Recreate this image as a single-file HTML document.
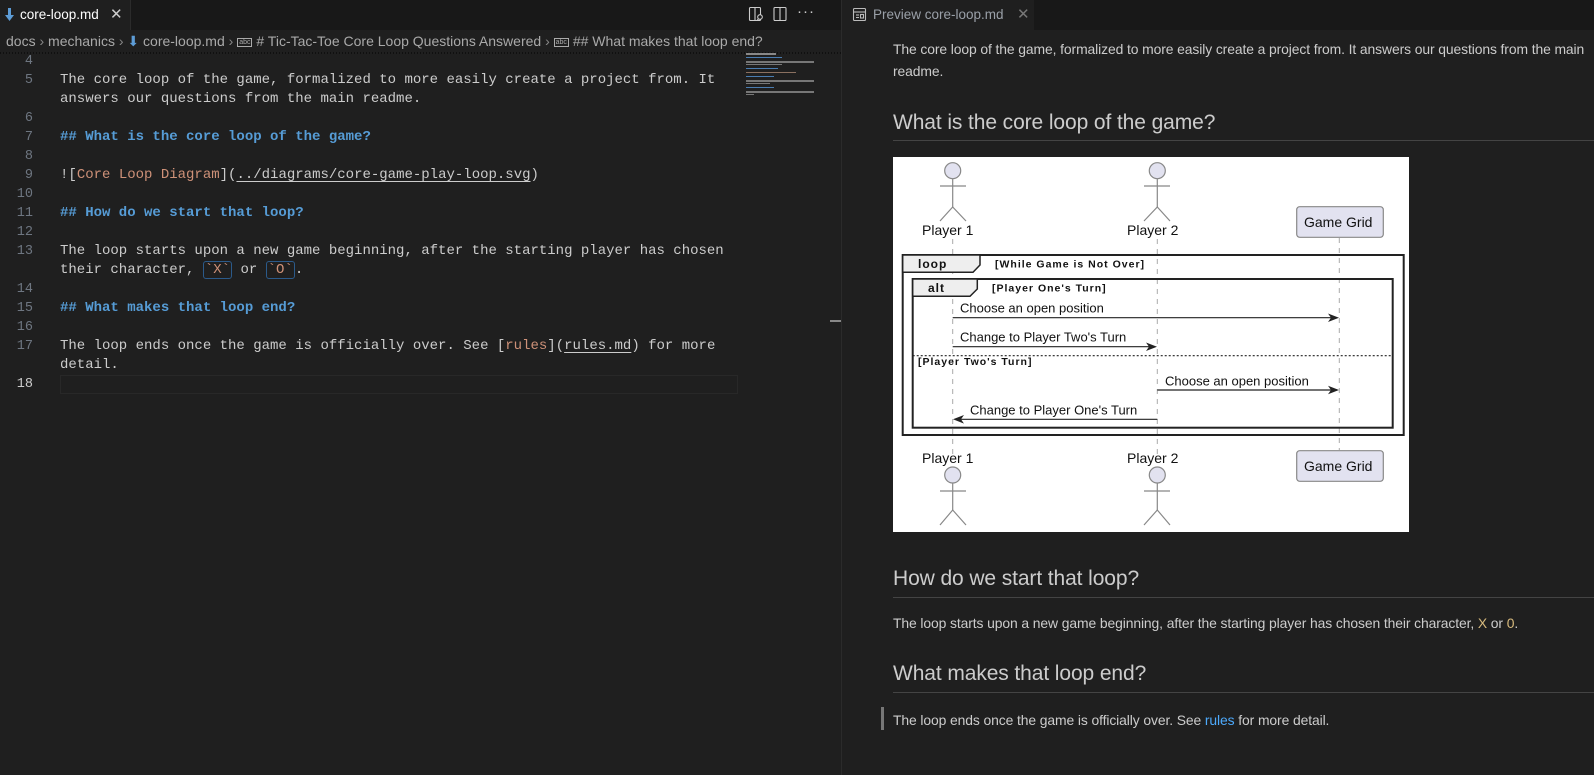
<!DOCTYPE html>
<html><head><meta charset="utf-8"><style>
*{margin:0;padding:0;box-sizing:border-box}
body{width:1594px;height:775px;background:#1f1f1f;position:relative;overflow:hidden;font-family:"Liberation Sans",sans-serif;color:#ccc}
.abs{position:absolute}
.tabbar{left:0;top:0;width:1594px;height:30px;background:#181818}
.mono{font-family:"Liberation Mono",monospace;font-size:14px;white-space:pre;line-height:19px}
.ln{position:absolute;left:0;width:33px;text-align:right;color:#6e7681;font-family:"Liberation Mono",monospace;font-size:13.5px;line-height:19px}
.tx{position:absolute;left:60px;color:#cccccc}
.h{color:#569cd6;font-weight:bold}
.lk{color:#ce9178}
.u{text-decoration:underline;text-underline-offset:3px}
.code{border:1px solid #2b5a8a;border-radius:3px;color:#ce9178;padding:0 1px}
.pv{position:absolute;left:893px;font-size:13.9px;letter-spacing:-0.1px;color:#cccccc;white-space:nowrap}
.h2{position:absolute;left:893px;width:720px;font-size:21px;letter-spacing:-0.1px;color:#cccccc;border-bottom:1px solid #444;white-space:nowrap}
</style></head><body>
<div class="abs tabbar"></div>
<div class="abs" style="left:0;top:0;width:131px;height:30px;background:#1f1f1f;border-right:1px solid #2b2b2b"></div>
<svg class="abs" style="left:5px;top:8px" width="9" height="14" viewBox="0 0 9 14"><rect x="3" y="0" width="3" height="8" fill="#5d9cd6"/><path d="M0 7 L9 7 L4.5 13Z" fill="#5d9cd6"/></svg>
<div class="abs" style="left:20px;top:7px;font-size:13.5px;color:#fff">core-loop.md</div>
<div class="abs" style="left:110px;top:5px;font-size:15px;color:#ccc">✕</div>
<svg class="abs" style="left:748px;top:6px" width="16" height="16" viewBox="0 0 16 16" fill="none" stroke="#ccc" stroke-width="1.1"><rect x="1.5" y="1.5" width="11" height="13" rx="1"/><line x1="7" y1="1.5" x2="7" y2="14.5"/><circle cx="12" cy="11" r="2.3" fill="#181818"/><line x1="10.5" y1="12.8" x2="9" y2="14.5"/></svg>
<svg class="abs" style="left:772px;top:6px" width="16" height="16" viewBox="0 0 16 16" fill="none" stroke="#ccc" stroke-width="1.1"><rect x="2" y="1.5" width="12" height="13" rx="1"/><line x1="8" y1="1.5" x2="8" y2="14.5"/></svg>
<div class="abs" style="left:797px;top:3px;font-size:15px;color:#ccc;letter-spacing:1px">···</div>
<div class="abs" style="left:842px;top:0;width:192px;height:30px;background:#1f1f1f"></div>
<svg class="abs" style="left:852px;top:7px" width="15" height="15" viewBox="0 0 15 15" fill="none" stroke="#bbb" stroke-width="1.1"><rect x="1.5" y="1.5" width="12" height="12" rx="1"/><line x1="1.5" y1="5" x2="13.5" y2="5"/><line x1="4" y1="8" x2="7" y2="8"/><line x1="4" y1="10.5" x2="7" y2="10.5"/><rect x="8.5" y="7.5" width="3" height="3.5"/></svg>
<div class="abs" style="left:873px;top:7px;font-size:13.5px;color:#9aa0a8">Preview core-loop.md</div>
<div class="abs" style="left:1017px;top:5px;font-size:15px;color:#777">✕</div>
<div class="abs" style="left:841px;top:0;width:1px;height:775px;background:#2b2b2b"></div>
<div class="abs" style="left:6px;top:33px;font-size:14px;color:#a9a9a9;white-space:nowrap">docs <span style="color:#888">›</span> mechanics <span style="color:#888">›</span> <span style="color:#5d9cd6">⬇</span> core-loop.md <span style="color:#888">›</span> <span style="border:1px solid #aaa;font-size:7px;padding:0 1px;vertical-align:2px">abc</span> # Tic-Tac-Toe Core Loop Questions Answered <span style="color:#888">›</span> <span style="border:1px solid #aaa;font-size:7px;padding:0 1px;vertical-align:2px">abc</span> ## What makes that loop end?</div>
<div class="abs" style="left:0;top:52px;width:841px;height:2px;background:repeating-linear-gradient(90deg,#000 0 1px,transparent 1px 3px);opacity:.5"></div>
<div class="abs" style="left:0;top:52px;width:745px;height:400px">
<div class="ln" style="top:0">4</div>
<div class="ln" style="top:19px">5</div><div class="tx mono" style="top:19px">The core loop of the game, formalized to more easily create a project from. It</div>
<div class="tx mono" style="top:38px">answers our questions from the main readme.</div>
<div class="ln" style="top:57px">6</div>
<div class="ln" style="top:76px">7</div><div class="tx mono h" style="top:76px">## What is the core loop of the game?</div>
<div class="ln" style="top:95px">8</div>
<div class="ln" style="top:114px">9</div><div class="tx mono" style="top:114px">![<span class="lk">Core Loop Diagram</span>](<span class="u">../diagrams/core-game-play-loop.svg</span>)</div>
<div class="ln" style="top:133px">10</div>
<div class="ln" style="top:152px">11</div><div class="tx mono h" style="top:152px">## How do we start that loop?</div>
<div class="ln" style="top:171px">12</div>
<div class="ln" style="top:190px">13</div><div class="tx mono" style="top:190px">The loop starts upon a new game beginning, after the starting player has chosen</div>
<div class="tx mono" style="top:209px">their character, <span class="code">`X`</span> or <span class="code">`O`</span>.</div>
<div class="ln" style="top:228px">14</div>
<div class="ln" style="top:247px">15</div><div class="tx mono h" style="top:247px">## What makes that loop end?</div>
<div class="ln" style="top:266px">16</div>
<div class="ln" style="top:285px">17</div><div class="tx mono" style="top:285px">The loop ends once the game is officially over. See [<span class="lk">rules</span>](<span class="u">rules.md</span>) for more</div>
<div class="tx mono" style="top:304px">detail.</div>
<div class="abs" style="left:60px;top:323px;width:678px;height:19px;border:1px solid #282828"></div>
<div class="ln" style="top:323px;color:#ccc">18</div>
</div>
<div class="abs" style="left:746px;top:53px;width:70px;height:45px">
<div class="abs" style="left:0;top:0;width:30px;height:2px;background:#888"></div>
<div class="abs" style="left:0;top:4px;width:36px;height:1px;background:#4a7cb0"></div>
<div class="abs" style="left:0;top:8px;width:68px;height:2px;background:#777"></div>
<div class="abs" style="left:0;top:11px;width:36px;height:1px;background:#777"></div>
<div class="abs" style="left:0;top:15px;width:32px;height:1px;background:#4a7cb0"></div>
<div class="abs" style="left:0;top:19px;width:50px;height:1px;background:#8a7060"></div>
<div class="abs" style="left:0;top:23px;width:28px;height:1px;background:#4a7cb0"></div>
<div class="abs" style="left:0;top:27px;width:68px;height:2px;background:#777"></div>
<div class="abs" style="left:0;top:30px;width:24px;height:1px;background:#777"></div>
<div class="abs" style="left:0;top:34px;width:28px;height:1px;background:#4a7cb0"></div>
<div class="abs" style="left:0;top:38px;width:68px;height:2px;background:#777"></div>
<div class="abs" style="left:0;top:41px;width:8px;height:1px;background:#777"></div>
</div>
<div class="abs" style="left:830px;top:320px;width:11px;height:2px;background:#888"></div>
<div class="pv" style="top:41px">The core loop of the game, formalized to more easily create a project from. It answers our questions from the main</div>
<div class="pv" style="top:63px">readme.</div>
<div class="h2" style="top:111px;height:30px">What is the core loop of the game?</div>
<svg class="abs" style="left:893px;top:157px;background:#fff" width="516" height="375" viewBox="0 0 516 375" font-family="Liberation Sans, sans-serif">
<g stroke="#aaa" stroke-width="1" stroke-dasharray="5,5">
<line x1="59.7" y1="82" x2="59.7" y2="300"/><line x1="264.3" y1="82" x2="264.3" y2="300"/><line x1="446.3" y1="81" x2="446.3" y2="293"/>
</g>
<g stroke="#888" fill="none" stroke-width="1.2">
<circle cx="59.7" cy="13.7" r="8" fill="#e2e2f0"/><line x1="59.7" y1="22" x2="59.7" y2="50"/><line x1="47" y1="29" x2="73" y2="29"/><path d="M47 64 L59.7 50 L73 64"/>
<circle cx="264.3" cy="13.7" r="8" fill="#e2e2f0"/><line x1="264.3" y1="22" x2="264.3" y2="50"/><line x1="251" y1="29" x2="277" y2="29"/><path d="M251 64 L264.3 50 L277 64"/>
<circle cx="59.7" cy="318" r="8" fill="#e2e2f0"/><line x1="59.7" y1="326" x2="59.7" y2="353"/><line x1="47" y1="334" x2="73" y2="334"/><path d="M47 368 L59.7 353 L73 368"/>
<circle cx="264.3" cy="318" r="8" fill="#e2e2f0"/><line x1="264.3" y1="326" x2="264.3" y2="353"/><line x1="251" y1="334" x2="277" y2="334"/><path d="M251 368 L264.3 353 L277 368"/>
<rect x="403.7" y="49.7" width="86.6" height="30.6" rx="3" fill="#e2e2f0"/>
<rect x="403.7" y="293.7" width="86.6" height="30.6" rx="3" fill="#e2e2f0"/>
</g>
<g font-size="14" fill="#111">
<text x="29" y="78">Player 1</text><text x="234" y="78">Player 2</text><text x="411" y="70">Game Grid</text>
<text x="29" y="306">Player 1</text><text x="234" y="306">Player 2</text><text x="411" y="314">Game Grid</text>
</g>
<g stroke="#222" fill="none" stroke-width="2">
<rect x="9.7" y="98" width="501" height="180"/>
<rect x="19.7" y="122" width="480" height="148.7"/>
</g>
<path d="M9.7 98 H87 V108 L80 115.3 H9.7Z" fill="#eee" stroke="#222" stroke-width="1.5"/>
<path d="M19.7 122 H84.3 V132 L77 139.3 H19.7Z" fill="#eee" stroke="#222" stroke-width="1.5"/>
<g font-weight="bold" fill="#111" letter-spacing="1">
<text x="25" y="111" font-size="12">loop</text>
<text x="102" y="110.7" font-size="10.5">[While Game is Not Over]</text>
<text x="35" y="135" font-size="12">alt</text>
<text x="99" y="134.7" font-size="10.5">[Player One's Turn]</text>
<text x="25" y="208" font-size="10.5">[Player Two's Turn]</text>
</g>
<line x1="19.7" y1="198.7" x2="500" y2="198.7" stroke="#222" stroke-width="1.2" stroke-dasharray="2,2"/>
<g font-size="13" fill="#111">
<text x="67" y="155.7">Choose an open position</text>
<text x="67" y="184.7">Change to Player Two's Turn</text>
<text x="272" y="228.7">Choose an open position</text>
<text x="77" y="257.3">Change to Player One's Turn</text>
</g>
<g stroke="#222" stroke-width="1.2">
<line x1="59.7" y1="160.7" x2="444" y2="160.7"/><line x1="59.7" y1="189.7" x2="262" y2="189.7"/>
<line x1="264.3" y1="233" x2="444" y2="233"/><line x1="264.3" y1="262.3" x2="62" y2="262.3"/>
</g>
<g fill="#222">
<path d="M446 160.7 L435 156.5 L438 160.7 L435 165Z"/><path d="M264 189.7 L253 185.5 L256 189.7 L253 194Z"/>
<path d="M446 233 L435 228.8 L438 233 L435 237.3Z"/><path d="M60 262.3 L71 258 L68 262.3 L71 266.6Z"/>
</g>
</svg>
<div class="h2" style="top:567px;height:31px">How do we start that loop?</div>
<div class="pv" style="top:615px">The loop starts upon a new game beginning, after the starting player has chosen their character, <span style="color:#d7ba7d">X</span> or <span style="color:#d7ba7d">0</span>.</div>
<div class="h2" style="top:662px;height:31px">What makes that loop end?</div>
<div class="abs" style="left:881px;top:707px;width:3px;height:23px;background:#777"></div>
<div class="pv" style="top:712px">The loop ends once the game is officially over. See <span style="color:#4daafc">rules</span> for more detail.</div>
</body></html>
